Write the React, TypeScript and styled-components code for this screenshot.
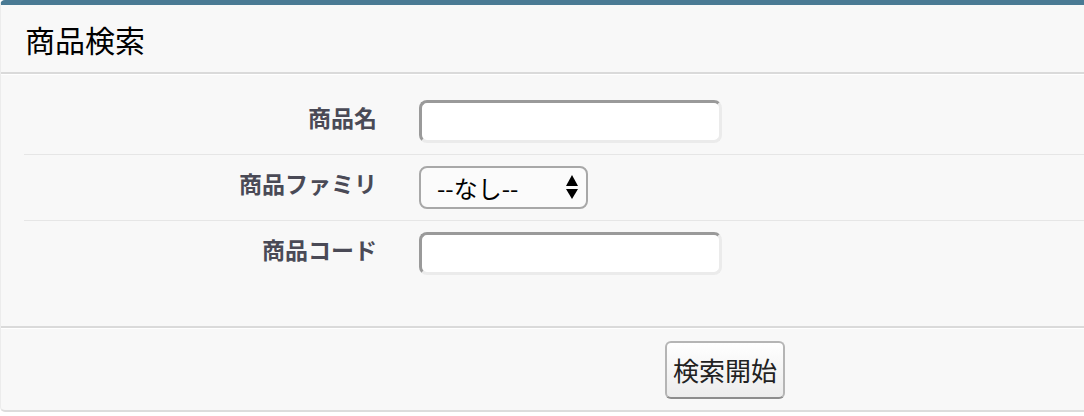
import React from "react";
import styled, { createGlobalStyle } from "styled-components";

const Global = createGlobalStyle`
  html, body { margin: 0; padding: 0; background: #ffffff; }
  body { font-family: "Noto Sans CJK JP", "Noto Sans", "Liberation Sans", sans-serif; }
  * { box-sizing: border-box; }
`;

const Panel = styled.div`
  width: 100%;
  background: #f8f8f8;
  border-top: 5px solid #4a7a94;
  border-left: 1px solid #ececec;
  border-radius: 5px 0 0 5px;
  border-bottom: 2px solid #dcdcdc;
  overflow: hidden;
`;

const Header = styled.div`
  height: 69px;
  display: flex;
  align-items: center;
  padding: 0 24px;
  border-bottom: 2px solid #dadada;
`;

const Title = styled.h2`
  margin: 0;
  font-size: 30px;
  font-weight: 400;
  color: #000;
  line-height: 1;
`;

const Body = styled.div`
  border-top: 1px solid #ffffff;
  padding: 14px 0 40px 23px;
  border-bottom: 2px solid #dadada;
`;

const Row = styled.div<{ $last?: boolean }>`
  display: grid;
  grid-template-columns: 374px 1fr;
  align-items: start;
  padding: 11px 0;
  border-bottom: ${(p) => (p.$last ? "none" : "1px solid #e6e6e6")};
`;

const Label = styled.label`
  text-align: right;
  padding-right: 21px;
  padding-top: 3px;
  font-size: 23px;
  line-height: 28px;
  font-weight: 700;
  color: #4a4a56;
`;

const Field = styled.div`
  display: flex;
  align-items: center;
  padding-left: 21px;
`;

const TextInput = styled.input`
  width: 303px;
  height: 43px;
  border-style: solid;
  border-width: 3px;
  border-color: #9a9a9a #ebebeb #ebebeb #9a9a9a;
  border-radius: 8px;
  background: #ffffff;
  outline: none;
  font-size: 22px;
  padding: 0 8px;
`;

const SelectWrap = styled.div`
  position: relative;
  width: 169px;
  height: 43px;
`;

const Select = styled.select`
  appearance: none;
  -webkit-appearance: none;
  width: 100%;
  height: 100%;
  border: 2px solid #a8a8a8;
  border-radius: 8px;
  background: #fbfbfb;
  padding: 0 0 0 16px;
  font-family: "Noto Sans CJK JP", "Noto Sans", sans-serif;
  font-size: 24px;
  color: #000;
  outline: none;
`;

const Arrows = styled.svg`
  position: absolute;
  right: 10px;
  top: 9px;
  pointer-events: none;
`;

const Footer = styled.div`
  border-top: 1px solid #ffffff;
  height: 82px;
  display: flex;
  align-items: center;
  padding-left: 664px;
`;

const Button = styled.button`
  height: 58px;
  padding: 0 6px;
  border: 2px solid #b5b5b5;
  border-bottom-color: #8c8c8c;
  border-radius: 6px;
  background: linear-gradient(#ffffff, #ececec);
  font-family: "Noto Sans CJK JP", "Noto Sans", sans-serif;
  font-size: 26px;
  color: #222;
  cursor: pointer;
`;

export default function App() {
  return (
    <>
      <Global />
      <Panel>
        <Header>
          <Title>商品検索</Title>
        </Header>
        <Body>
          <Row>
            <Label>商品名</Label>
            <Field>
              <TextInput type="text" />
            </Field>
          </Row>
          <Row>
            <Label>商品ファミリ</Label>
            <Field>
              <SelectWrap>
                <Select defaultValue="">
                  <option value="">--なし--</option>
                </Select>
                <Arrows width="12" height="25" viewBox="0 0 12 25">
                  <polygon points="6,0 12,11 0,11" fill="#000" />
                  <polygon points="0,14 12,14 6,24" fill="#000" />
                </Arrows>
              </SelectWrap>
            </Field>
          </Row>
          <Row $last>
            <Label>商品コード</Label>
            <Field>
              <TextInput type="text" />
            </Field>
          </Row>
        </Body>
        <Footer>
          <Button type="button">検索開始</Button>
        </Footer>
      </Panel>
    </>
  );
}
